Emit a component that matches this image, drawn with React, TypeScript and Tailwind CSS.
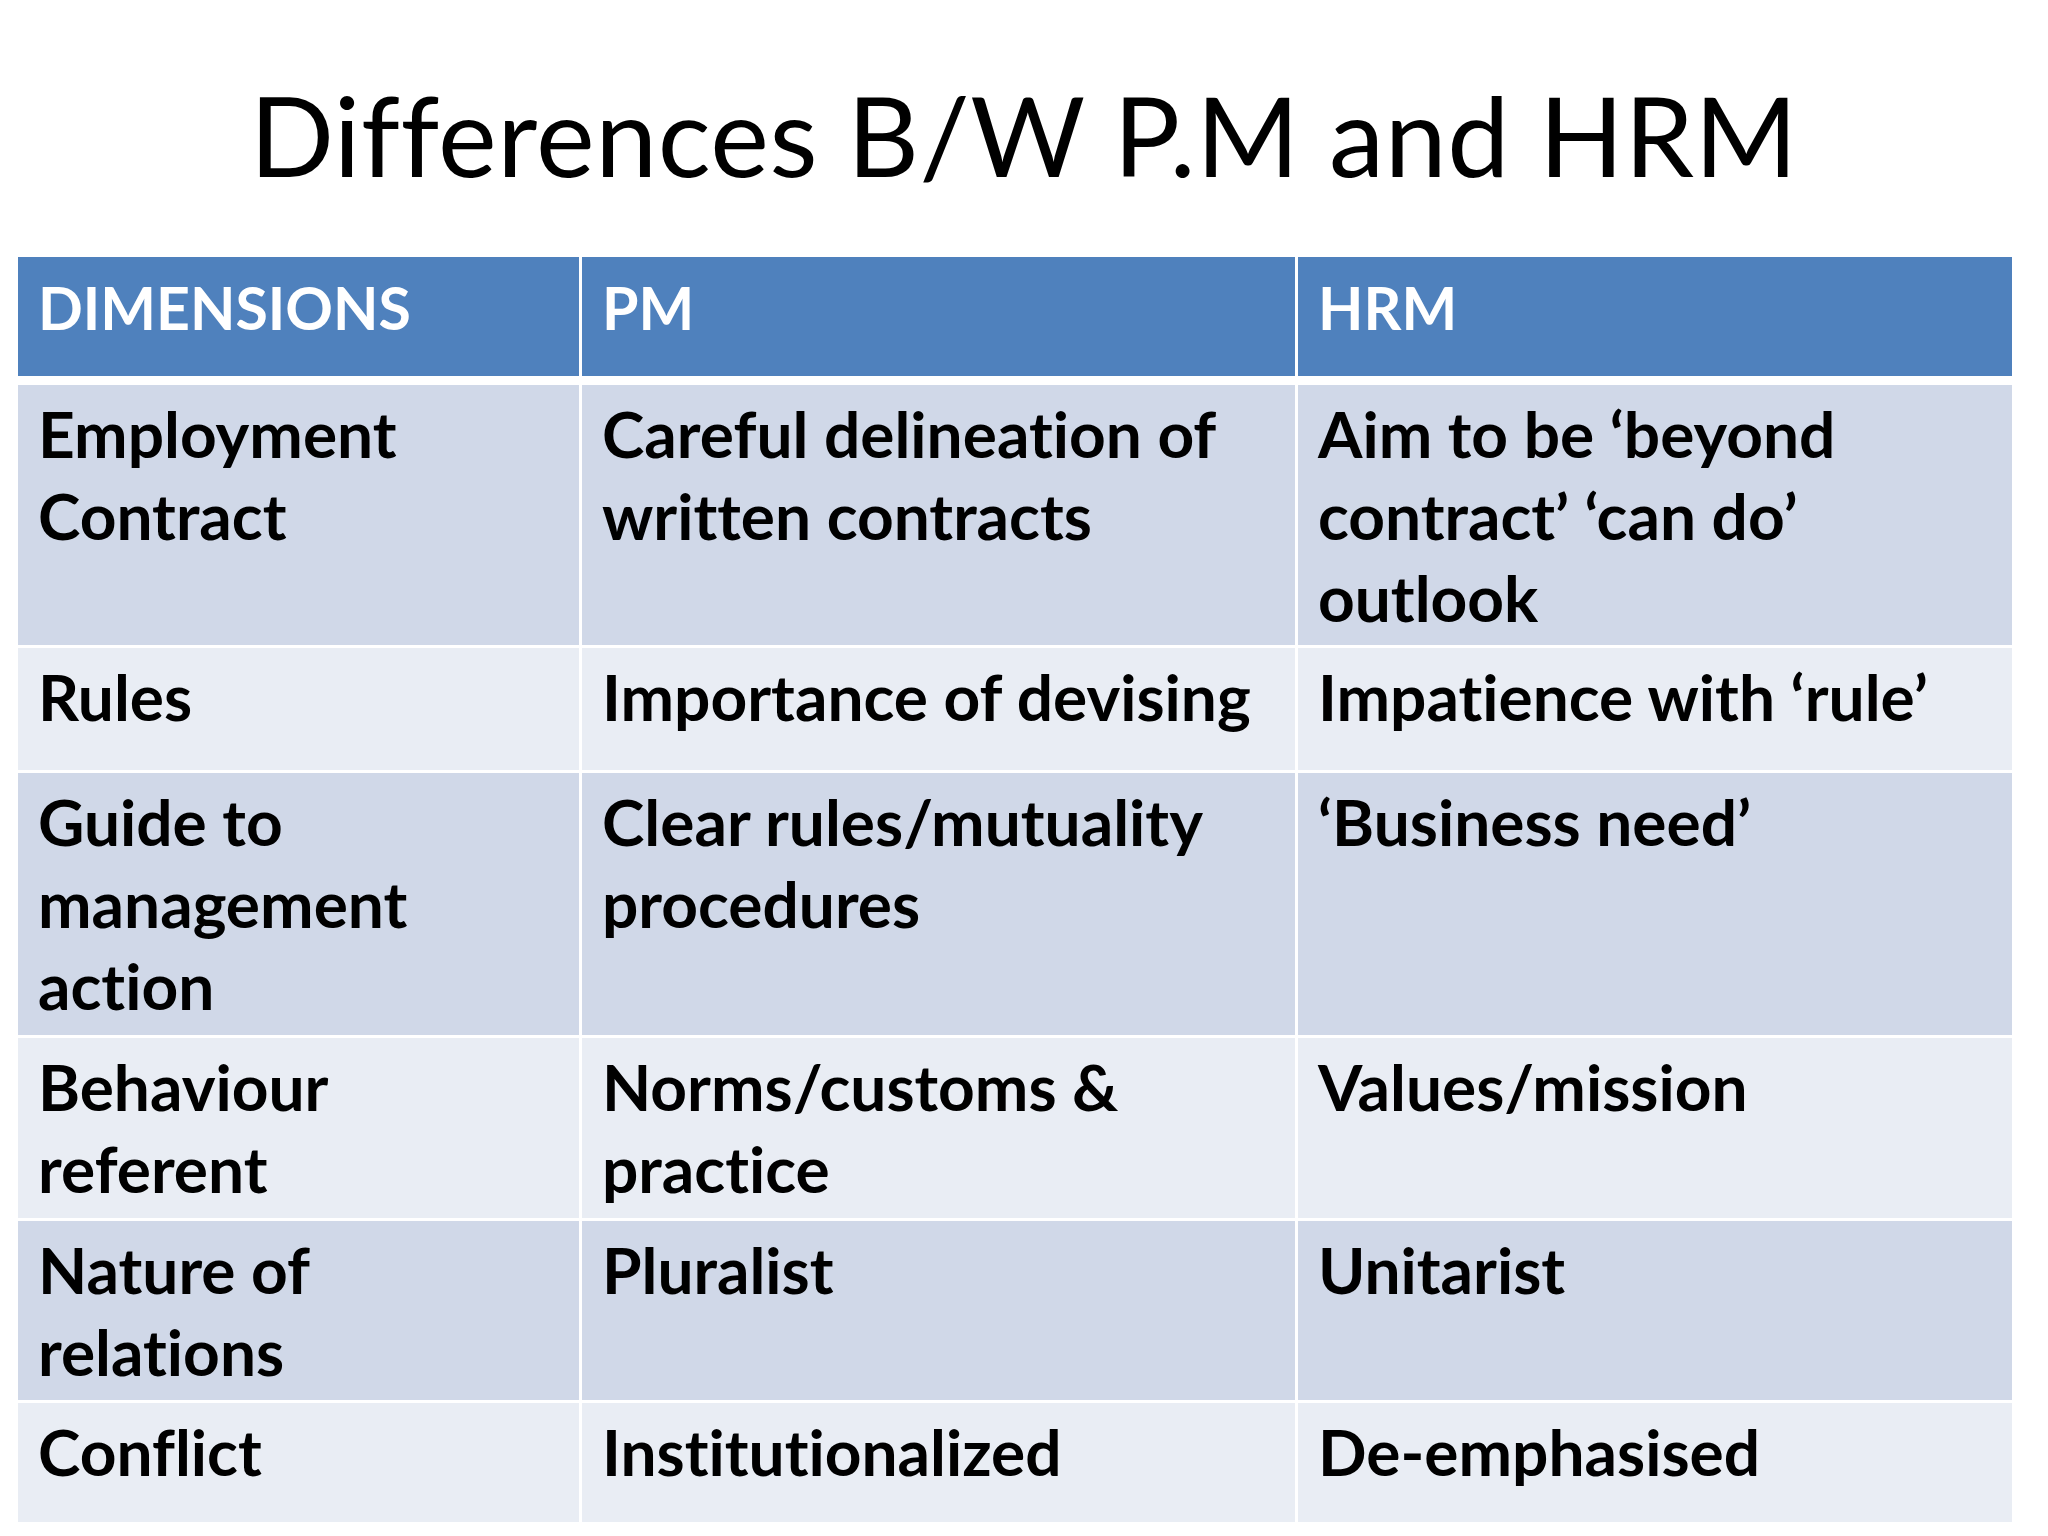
import React from "react";

const rows: { cells: string[][]; band: "a" | "b"; h: string }[] = [
  {
    band: "a",
    h: "h-[260px]",
    cells: [
      ["Employment", "Contract"],
      ["Careful delineation of", "written contracts"],
      ["Aim to be \u2018beyond", "contract\u2019 \u2018can do\u2019", "outlook"],
    ],
  },
  {
    band: "b",
    h: "h-[122px]",
    cells: [["Rules"], ["Importance of devising"], ["Impatience with \u2018rule\u2019"]],
  },
  {
    band: "a",
    h: "h-[262px]",
    cells: [
      ["Guide to", "management", "action"],
      ["Clear rules/mutuality", "procedures"],
      ["\u2018Business need\u2019"],
    ],
  },
  {
    band: "b",
    h: "h-[180px]",
    cells: [["Behaviour", "referent"], ["Norms/customs &", "practice"], ["Values/mission"]],
  },
  {
    band: "a",
    h: "h-[179px]",
    cells: [["Nature of", "relations"], ["Pluralist"], ["Unitarist"]],
  },
  {
    band: "b",
    h: "h-[119px]",
    cells: [["Conflict"], ["Institutionalized"], ["De-emphasised"]],
  },
];

function Cell({ lines, cls }: { lines: string[]; cls: string }) {
  return (
    <div className={`pl-[20px] pr-[8px] whitespace-nowrap font-bold leading-[82px] ${cls}`}>
      {lines.map((l, i) => (
        <div key={i}>{l}</div>
      ))}
    </div>
  );
}

export default function App() {
  return (
    <div className="w-[2048px] h-[1536px] bg-white font-['Lato','Open_Sans',sans-serif] text-black overflow-hidden [font-variant-ligatures:none]">
      <h1 className="h-[257px] pt-[79px] text-center text-[111px] tracking-[0.6px] leading-none font-normal">
        Differences B/W P.M and HRM
      </h1>
      <div className="ml-[18px] w-[1994px]">
        <div className="grid grid-cols-[561px_713px_714px] gap-x-[3px] h-[119px] mb-[9px]">
          <Cell lines={["DIMENSIONS"]} cls="bg-[#4f81bd] text-white text-[59px] pt-[10px]" />
          <Cell lines={["PM"]} cls="bg-[#4f81bd] text-white text-[59px] pt-[10px]" />
          <Cell lines={["HRM"]} cls="bg-[#4f81bd] text-white text-[59px] pt-[10px]" />
        </div>
        <div className="flex flex-col gap-y-[3px]">
          {rows.map((r, i) => (
            <div key={i} className={`grid grid-cols-[561px_713px_714px] gap-x-[3px] ${r.h}`}>
              {r.cells.map((c, j) => (
                <Cell
                  key={j}
                  lines={c}
                  cls={`text-[64px] pt-[8px] ${r.band === "a" ? "bg-[#d0d8e8]" : "bg-[#e9edf4]"}`}
                />
              ))}
            </div>
          ))}
        </div>
      </div>
    </div>
  );
}
